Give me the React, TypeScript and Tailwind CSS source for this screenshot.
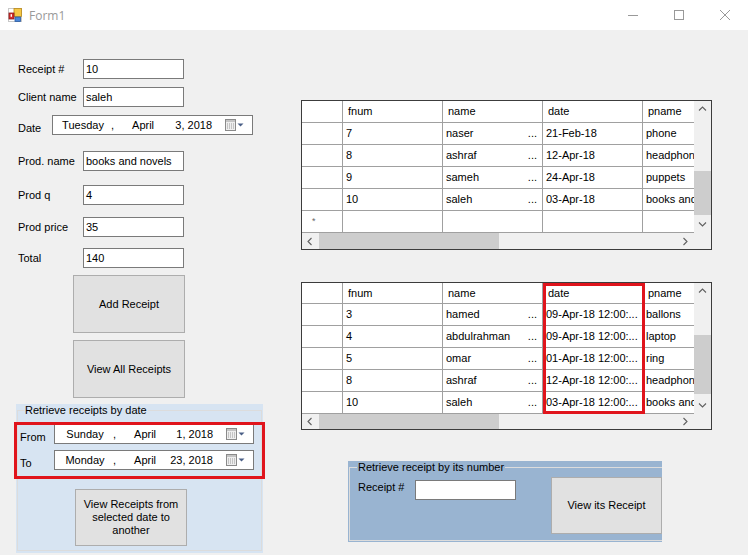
import React from "react";

type Dir = "up" | "down" | "left" | "right";

function Chevron({ dir }: { dir: Dir }) {
  const d: Record<Dir, string> = {
    up: "M1 5.5 L4.5 2 L8 5.5",
    down: "M1 2.5 L4.5 6 L8 2.5",
    left: "M5.5 1 L2 4.5 L5.5 8",
    right: "M2.5 1 L6 4.5 L2.5 8",
  };
  return (
    <svg width="9" height="9" viewBox="0 0 9 9">
      <path d={d[dir]} fill="none" stroke="#606060" strokeWidth="1.1" />
    </svg>
  );
}

function AppIcon() {
  return (
    <svg width="14" height="14" viewBox="0 0 14 14">
      <rect x="0.5" y="0.5" width="13" height="13" fill="#fff" stroke="#c8c8c8" />
      <rect x="6" y="0.5" width="7.5" height="8" fill="#f6c744" stroke="#b88a1c" strokeWidth="0.8" />
      <rect x="1" y="5" width="5" height="6" fill="#d42d2d" stroke="#8a1a1a" strokeWidth="0.8" />
      <rect x="2.6" y="6.2" width="1.4" height="2.6" fill="#fff" />
      <rect x="7" y="9" width="5.5" height="4.5" fill="#4a86d8" stroke="#2a5aa0" strokeWidth="0.8" />
    </svg>
  );
}

function CalendarIcon() {
  return (
    <svg width="19" height="12" viewBox="0 0 19 12">
      <rect x="0.5" y="0.5" width="10" height="11" fill="#eeeeee" stroke="#8a8a8a" />
      <rect x="1" y="1" width="9" height="2" fill="#c4c4c4" />
      {[2, 4, 6, 8].map((x) =>
        [4.5, 6.5, 8.5].map((y) => <rect key={`${x}-${y}`} x={x} y={y} width="1" height="1" fill="#9a9a9a" />)
      )}
      <path d="M12.5 4.5 L18.5 4.5 L15.5 7.5 Z" fill="#4a5f86" />
    </svg>
  );
}

function TextBox({ value, className }: { value: string; className: string }) {
  return (
    <div className={`h-[20px] bg-white border border-[#7a7a7a] pl-[2px] flex items-center whitespace-nowrap ${className}`}>
      {value}
    </div>
  );
}

function Field({ label, value, className }: { label: string; value: string; className: string }) {
  return (
    <div className={`flex items-center ${className}`}>
      <span className="ml-[18px] w-[65px]">{label}</span>
      <TextBox value={value} className="w-[101px]" />
    </div>
  );
}

function DatePicker({ weekday, day, className }: { weekday: string; day: string; className: string }) {
  return (
    <div className={`h-[20px] bg-white border border-[#7a7a7a] flex items-center whitespace-nowrap ${className}`}>
      <span className="ml-[8px] w-[44px] text-center">{weekday}</span>
      <span className="ml-[6px]">,</span>
      <span className="ml-[18px]">April</span>
      <span className="flex-1 text-right">{day}</span>
      <div className="w-[40px] pl-[13px] flex items-center">
        <CalendarIcon />
      </div>
    </div>
  );
}

function WinButton({ label, className }: { label: string; className: string }) {
  return (
    <div className={`bg-[#e1e1e1] border border-[#adadad] flex items-center justify-center text-center ${className}`}>
      {label}
    </div>
  );
}

type Row = { fnum: string; name: string; date: string; pname: string };

function Grid({
  rows,
  newRow,
  className,
  headerH,
  scrollH,
  thumbTop,
  thumbH,
}: {
  rows: Row[];
  newRow?: boolean;
  className: string;
  headerH: string;
  scrollH: string;
  thumbTop: string;
  thumbH: string;
}) {
  const cell = "w-[100px] shrink-0 border-r border-[#a0a0a0] pl-[3px] flex items-center overflow-hidden";
  return (
    <div className={`w-[411px] flex flex-col border border-[#3c3c3c] bg-white ${className}`}>
      <div className="flex flex-1 min-h-0">
        <div className="flex-1 overflow-hidden whitespace-nowrap">
          <div className={`flex border-b border-[#a0a0a0] ${headerH}`}>
            <div className="w-[41px] shrink-0 border-r border-[#a0a0a0]" />
            {["fnum", "name", "date", "pname"].map((h) => (
              <div key={h} className="w-[100px] shrink-0 border-r border-[#a0a0a0] pl-[5px] flex items-center">
                {h}
              </div>
            ))}
          </div>
          {rows.map((r, i) => (
            <div key={i} className="flex h-[22px] border-b border-[#a0a0a0]">
              <div className="w-[41px] shrink-0 border-r border-[#a0a0a0]" />
              <div className={cell}>{r.fnum}</div>
              <div className={`${cell} justify-between pr-[5px]`}>
                <span>{r.name}</span>
                <span>...</span>
              </div>
              <div className={cell}>{r.date}</div>
              <div className="w-[52px] shrink-0 pl-[3px] flex items-center overflow-hidden">{r.pname}</div>
            </div>
          ))}
          {newRow && (
            <div className="flex h-[22px] border-b border-[#a0a0a0]">
              <div className="w-[41px] shrink-0 border-r border-[#a0a0a0] pl-[10px] flex items-center text-[9px] text-[#666]">
                *
              </div>
              <div className="w-[100px] shrink-0 border-r border-[#a0a0a0]" />
              <div className="w-[100px] shrink-0 border-r border-[#a0a0a0]" />
              <div className="w-[100px] shrink-0 border-r border-[#a0a0a0]" />
              <div className="w-[100px] shrink-0 border-r border-[#a0a0a0]" />
            </div>
          )}
        </div>
        <div className="w-[17px] bg-[#f0f0f0] flex flex-col">
          <div className="h-[17px] flex items-center justify-center">
            <Chevron dir="up" />
          </div>
          <div className={`bg-[#cdcdcd] ${thumbTop} ${thumbH}`} />
          <div className="flex-1" />
          <div className="h-[17px] flex items-center justify-center">
            <Chevron dir="down" />
          </div>
        </div>
      </div>
      <div className={`flex bg-[#f0f0f0] ${scrollH}`}>
        <div className="w-[17px] flex items-center justify-center">
          <Chevron dir="left" />
        </div>
        <div className="w-[180px] bg-[#cdcdcd]" />
        <div className="flex-1" />
        <div className="w-[17px] flex items-center justify-center">
          <Chevron dir="right" />
        </div>
        <div className="w-[17px]" />
      </div>
    </div>
  );
}

const rows1: Row[] = [
  { fnum: "7", name: "naser", date: "21-Feb-18", pname: "phone" },
  { fnum: "8", name: "ashraf", date: "12-Apr-18", pname: "headphones" },
  { fnum: "9", name: "sameh", date: "24-Apr-18", pname: "puppets" },
  { fnum: "10", name: "saleh", date: "03-Apr-18", pname: "books and novels" },
];

const rows2: Row[] = [
  { fnum: "3", name: "hamed", date: "09-Apr-18 12:00:...", pname: "ballons" },
  { fnum: "4", name: "abdulrahman", date: "09-Apr-18 12:00:...", pname: "laptop" },
  { fnum: "5", name: "omar", date: "01-Apr-18 12:00:...", pname: "ring" },
  { fnum: "8", name: "ashraf", date: "12-Apr-18 12:00:...", pname: "headphones" },
  { fnum: "10", name: "saleh", date: "03-Apr-18 12:00:...", pname: "books and novels" },
];

export default function App() {
  return (
    <div className="relative w-[748px] h-[555px] overflow-hidden bg-[#f0f0f0] font-['Liberation_Sans',Arial,sans-serif] text-[11px] leading-[13px] text-black flex flex-col">
      {/* Title bar */}
      <div className="h-[30px] bg-white flex items-center shrink-0">
        <div className="ml-[8px] flex items-center">
          <AppIcon />
        </div>
        <span className="ml-[7px] text-[12px] text-[#999] font-['Open_Sans',sans-serif]">Form1</span>
        <div className="flex-1" />
        <div className="w-[46px] h-[30px] flex items-center justify-center">
          <svg width="10" height="10" viewBox="0 0 10 10">
            <path d="M0 5.5 H10" stroke="#999" strokeWidth="1" />
          </svg>
        </div>
        <div className="w-[46px] h-[30px] flex items-center justify-center">
          <svg width="10" height="10" viewBox="0 0 10 10">
            <rect x="0.5" y="0.5" width="9" height="9" fill="none" stroke="#999" />
          </svg>
        </div>
        <div className="w-[46px] h-[30px] flex items-center justify-center">
          <svg width="10" height="10" viewBox="0 0 10 10">
            <path d="M0 0 L10 10 M10 0 L0 10" stroke="#999" strokeWidth="1" />
          </svg>
        </div>
      </div>

      <div className="flex flex-1">
        {/* Left column */}
        <div className="w-[301px] flex flex-col shrink-0">
          <Field label="Receipt #" value="10" className="mt-[29px]" />
          <Field label="Client name" value="saleh" className="mt-[8px]" />
          <div className="flex items-start mt-[8px]">
            <span className="ml-[18px] w-[34px] mt-[7px]">Date</span>
            <DatePicker weekday="Tuesday" day="3, 2018" className="w-[201px]" />
          </div>
          <Field label="Prod. name" value="books and novels" className="mt-[16px]" />
          <Field label="Prod q" value="4" className="mt-[14px]" />
          <Field label="Prod price" value="35" className="mt-[12px]" />
          <Field label="Total" value="140" className="mt-[11px]" />
          <WinButton label="Add Receipt" className="ml-[73px] mt-[7px] w-[112px] h-[58px]" />
          <WinButton label="View All Receipts" className="ml-[73px] mt-[7px] w-[112px] h-[58px]" />

          <div className="ml-[16px] mt-[6px] w-[247px] h-[149px] bg-[#d7e4f2] px-[1px] pb-[2px]">
            <fieldset className="h-full border border-[#dcdcdc]">
              <legend className="ml-[6px] px-[1px] leading-[13px]">Retrieve receipts by date</legend>
              <div className="flex items-start mt-[7px]">
                <span className="ml-[2px] w-[34px] mt-[7px]">From</span>
                <DatePicker weekday="Sunday" day="1, 2018" className="w-[200px]" />
              </div>
              <div className="flex items-start mt-[6px]">
                <span className="ml-[2px] w-[34px] mt-[7px]">To</span>
                <DatePicker weekday="Monday" day="23, 2018" className="w-[200px]" />
              </div>
              <WinButton
                label="View Receipts from selected date to another"
                className="ml-[57px] mt-[19px] w-[112px] h-[57px] px-[6px]"
              />
            </fieldset>
          </div>
        </div>

        {/* Right column */}
        <div className="flex flex-col">
          <Grid
            rows={rows1}
            newRow
            className="mt-[70px] h-[150px]"
            headerH="h-[22px]"
            scrollH="h-[16px]"
            thumbTop="mt-[53px]"
            thumbH="h-[44px]"
          />
          <Grid
            rows={rows2}
            className="mt-[32px] h-[148px]"
            headerH="h-[21px]"
            scrollH="h-[15px]"
            thumbTop="mt-[35px]"
            thumbH="h-[59px]"
          />

          <div className="ml-[47px] mt-[31px] w-[314px] h-[81px] bg-[#99b4d1] pl-[1px] pb-[1px]">
            <fieldset className="h-full border border-r-0 border-[#dcdcdc]">
              <legend className="ml-[7px] px-[1px] leading-[13px]">Retrieve receipt by its number</legend>
              <div className="flex items-start">
                <div className="flex items-start mt-[6px]">
                  <span className="ml-[8px] w-[57px] mt-[1px]">Receipt #</span>
                  <TextBox value="" className="w-[101px]" />
                </div>
                <WinButton label="View its Receipt" className="ml-[35px] mt-[3px] w-[111px] h-[57px]" />
              </div>
            </fieldset>
          </div>
        </div>
      </div>

      {/* Red annotation boxes */}
      <div className="absolute left-[14px] top-[422px] w-[251px] h-[57px] border-[3px] border-[#e0141c]" />
      <div className="absolute left-[543px] top-[283px] w-[102px] h-[131px] border-[3px] border-[#e0141c]" />
    </div>
  );
}
